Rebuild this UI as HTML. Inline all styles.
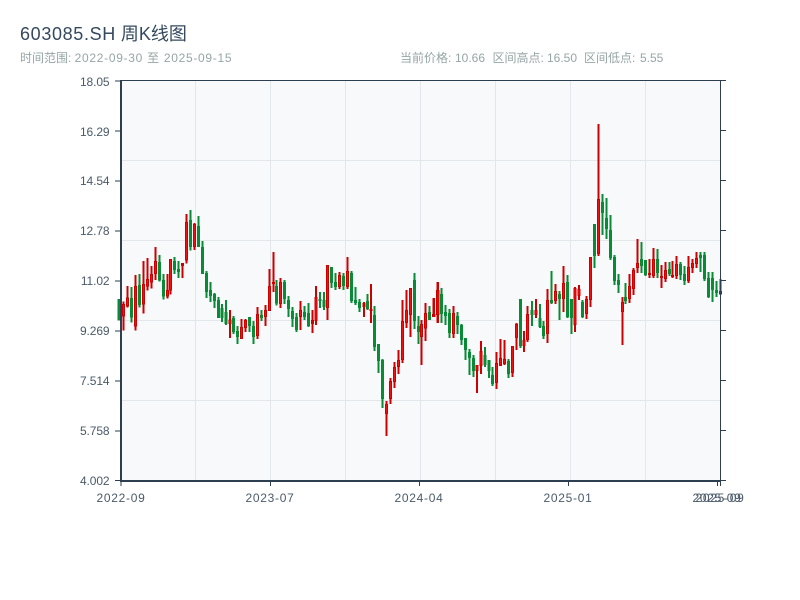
<!DOCTYPE html>
<html><head><meta charset="utf-8"><style>
html,body{margin:0;padding:0;background:#fff;width:800px;height:600px;overflow:hidden}
body{position:relative;font-family:"Liberation Sans","Noto Sans CJK SC",sans-serif}
div{position:absolute;white-space:pre;line-height:1}
.t{left:20px;top:25px;font-size:18px;color:#34495e}
.t span{letter-spacing:.65px}
.s{top:52px;font-size:12px;color:#95a5a6}
.y,.x{font-size:12px;color:#4a5a6a}
.y{width:60px;left:49.5px;text-align:right;letter-spacing:-.1px}
.x{width:80px;text-align:center;top:492px;letter-spacing:.7px}
svg{position:absolute;left:0;top:0}
.gw{stroke:#088a36;stroke-width:6.3;fill:none}
.gb{stroke:#088a36;stroke-width:9.3;fill:none}
.rw{stroke:#cc0000;stroke-width:6.3;fill:none}
.rb{stroke:#cc0000;stroke-width:9.3;fill:none}
.ri{stroke:#f01010;stroke-width:3.01;fill:none}
</style></head><body>
<div class="t"><span>603085.SH</span> 周K线图</div>
<div class="s" style="left:20px">时间范围: <span style="letter-spacing:.7px">2022-09-30 至 2025-09-15</span></div>
<div class="s" style="left:400px">当前价格:</div>
<div class="s" style="left:455px">10.66</div>
<div class="s" style="left:492.500px">区间高点:</div>
<div class="s" style="left:547px">16.50</div>
<div class="s" style="left:584px">区间低点:</div>
<div class="s" style="left:640px">5.55</div>
<svg width="800" height="600" shape-rendering="crispEdges">
<rect x="121" y="81" width="599" height="399" fill="#f8f9fb"/>
<path d="M195.5 81V480M270.5 81V480M345.5 81V480M420.5 81V480M495.5 81V480M570.5 81V480M645.5 81V480M121 160.5H720M121 240.5H720M121 320.5H720M121 400.5H720" stroke="#e3e6ea" fill="none"/>
<g transform="translate(110,200) scale(.33333)">
<path class="gw" d="M27 297V362M65 261V368M88 222V323M149 165V245M160 222V299M194 171V222M206 183V234M242 30V152M266 48V141M277 123V222M289 213V294M302 246V306M314 279V324M325 291V354M336 312V366M348 300V375M371 348V402M383 378V432M418 351V396M431 363V432M455 330V363"/>
<path class="gb" d="M27 297V362M65 294V353M88 255V315M149 186V242M160 240V290M194 183V210M206 207V216M242 60V141M266 78V141M277 141V222M289 219V276M302 270V288M314 282V303M325 300V354M336 324V354M348 336V372M371 354V396M383 393V411M418 351V378M431 378V411M455 345V354"/>
<path class="rw" d="M40 305V392M52 258V323M76 225V392M100 183V341M113 174V272M125 198V266M137 141V240M172 222V296M182 177V284M218 189V234M230 42V191M254 69V150M360 330V414M395 357V417M407 357V396M442 321V417M467 315V378M479 207V333M490 156V276"/>
<path class="rb" d="M40 312V350M52 292V320M76 258V380M100 252V314M113 237V260M125 222V248M137 183V222M172 270V290M182 177V272M218 189V198M230 66V182M254 72V141M360 358V372M395 381V417M407 360V384M442 342V408M467 330V351M479 258V333M490 246V252"/>
<path class="ri" d="M40 315V347M52 295V317M76 261V377M100 255V311M113 240V257M125 225V245M137 186V219M172 273V287M182 180V269M230 69V179M254 75V138M360 361V369M395 384V414M407 363V381M442 345V405M467 333V348M479 261V330"/>
</g>
<g transform="translate(270,240) scale(.33333)">
<path class="gw" d="M20 120V197M44 120V192M55 168V231M67 201V261M79 219V276M103 198V240M115 189V261M150 156V204M162 156V210M185 81V144M197 99V150M220 99V150M244 93V189M257 141V195M268 177V216M293 162V210M314 198V333M325 312V399M337 357V504M434 99V267M446 228V312M479 198V240"/>
<path class="gb" d="M20 138V190M44 126V177M55 180V207M67 213V237M79 231V270M103 216V231M115 219V258M150 177V183M162 180V201M185 81V129M197 126V141M220 108V138M244 99V183M257 180V189M268 186V204M293 183V207M314 225V321M325 312V363M337 360V477M434 120V243M446 258V276M479 216V240"/>
<path class="rw" d="M32 114V204M91 183V270M127 210V279M138 138V255M173 75V240M208 96V147M232 51V147M282 186V231M303 132V249M350 483V588M361 414V492M373 366V444M385 330V402M398 180V369M410 150V264M422 144V291M455 240V375M467 189V303M491 174V231M503 126V249"/>
<path class="rb" d="M32 126V192M91 210V231M127 240V252M138 171V243M173 75V204M208 105V141M232 93V141M282 189V201M303 207V213M350 492V522M361 423V477M373 381V426M385 360V381M398 243V360M410 210V249M422 144V225M455 252V291M467 219V265M491 222V231M503 150V225"/>
<path class="ri" d="M32 129V189M91 213V228M138 174V240M173 78V201M208 108V138M232 96V138M350 495V519M361 426V474M373 384V423M385 363V378M398 246V357M410 213V246M422 147V222M455 255V288M467 222V262M503 153V222"/>
</g>
<g transform="translate(430,260) scale(.33333)">
<path class="gw" d="M35 84V189M47 135V195M59 147V234M82 156V222M94 192V255M106 234V300M118 267V345M130 285V351M165 261V321M177 300V354M188 321V378M236 297V354M271 117V264M306 123V198M330 132V204M340 183V237M365 33V132M389 93V180M412 45V174M424 117V222"/>
<path class="gb" d="M35 102V162M47 156V168M59 159V219M82 168V195M94 195V240M106 234V270M118 276V294M130 294V333M165 285V315M177 300V333M188 345V372M236 303V342M271 117V258M306 150V165M330 174V201M340 198V228M365 120V129M389 102V117M412 66V171M424 117V174"/>
<path class="rw" d="M12 114V171M24 66V189M71 138V234M141 315V399M153 243V342M200 276V387M212 237V318M224 240V315M248 258V351M259 189V270M282 213V276M293 138V246M318 117V174M353 87V249M377 72V132M401 18V156M435 81V216M447 75V120"/>
<path class="rb" d="M12 162V171M24 90V165M71 159V222M141 315V333M153 273V318M200 309V369M212 294V318M224 297V312M248 258V339M259 192V234M282 240V258M293 162V240M318 150V165M353 120V222M377 93V123M401 69V117M435 84V195M447 87V108"/>
<path class="ri" d="M24 93V162M71 162V219M141 318V330M153 276V315M200 312V366M212 297V315M224 300V309M248 261V336M259 195V231M282 243V255M293 165V237M318 153V162M353 123V219M377 96V120M401 72V114M435 87V192M447 90V105"/>
</g>
<g transform="translate(580,120) scale(.33333)">
<path class="gw" d="M7 540V594M44 312V444M68 222V345M80 234V357M92 285V420M104 405V495M116 462V519M137 489V552M185 366V459M197 420V468M233 387V474M269 426V468M302 426V480M314 438V495M362 396V456M373 396V483M386 456V534M398 456V546M410 483V531"/>
<path class="gb" d="M7 546V591M44 312V408M68 246V279M80 294V327M92 330V414M104 411V483M116 480V495M137 531V543M185 417V438M197 420V465M233 417V459M269 447V462M302 432V465M314 462V483M362 405V414M373 405V477M386 474V531M398 474V510M410 510V519"/>
<path class="rw" d="M20 528V597M32 411V561M56 12V408M128 531V675M149 462V549M161 444V525M173 357V459M209 417V474M221 384V474M245 435V504M257 426V486M278 423V474M290 408V477M326 408V489M338 417V459M350 396V444M422 477V525"/>
<path class="rb" d="M20 537V582M32 411V540M56 237V402M128 546V576M149 498V537M161 450V507M173 429V444M209 459V465M221 417V468M245 468V474M257 450V477M278 465V471M290 432V468M326 441V483M338 429V444M350 414V432M422 513V522"/>
<path class="ri" d="M20 540V579M32 414V537M56 240V399M128 549V573M149 501V534M161 453V504M173 432V441M221 420V465M257 453V474M290 435V465M326 444V480M338 432V441M350 417V429"/>
</g>
<path d="M120 80.5H726M720.5 80V480M115 81H121M115 131H120M115 181H120M115 231H120M115 281H120M115 331H120M115 381H120M115 431H120M115 480.5H120M721 130.5H726M721 180.5H726M721 230.5H726M721 280.5H726M721 330.5H726M721 380.5H726M721 430.5H726M721 480.5H726M121 481V486M270.500 481V486M419.500 481V486M568.500 481V486M717.500 481V486M720.500 481V486" stroke="#2c3e50" fill="none"/>
<rect x="120" y="80" width="2" height="402" fill="#2c3e50"/>
<rect x="120" y="480" width="601" height="2" fill="#2c3e50"/>
</svg>
<div class="y" style="top:76px">18.05</div>
<div class="y" style="top:126px">16.29</div>
<div class="y" style="top:175px">14.54</div>
<div class="y" style="top:225px">12.78</div>
<div class="y" style="top:275px">11.02</div>
<div class="y" style="top:325px">9.269</div>
<div class="y" style="top:375px">7.514</div>
<div class="y" style="top:425px">5.758</div>
<div class="y" style="top:475px">4.002</div>
<div class="x" style="left:81px">2022-09</div>
<div class="x" style="left:230px">2023-07</div>
<div class="x" style="left:379px">2024-04</div>
<div class="x" style="left:528px">2025-01</div>
<div class="x" style="left:677px">2025-09</div>
<div class="x" style="left:680px">2025-09</div>
</body></html>
